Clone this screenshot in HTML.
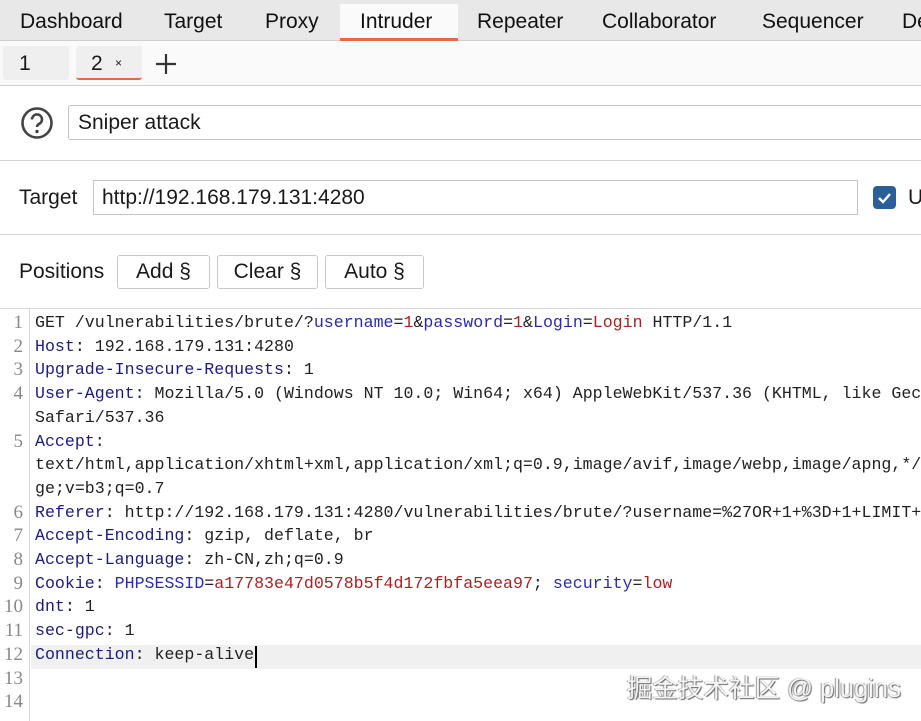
<!DOCTYPE html>
<html><head><meta charset="utf-8"><style>
*{margin:0;padding:0;box-sizing:border-box}
body{width:921px;height:721px;overflow:hidden;background:#fff;font-family:"Liberation Sans","Noto Sans CJK SC",sans-serif;color:#1a1a1a;position:relative}
.abs{position:absolute}
.top{left:0;top:0;width:921px;height:41px;background:#e8e8e8;border-bottom:1px solid #cfcfcf}
.tab{position:absolute;top:10px;font-size:21px;color:#111}
.sub{left:0;top:41px;width:921px;height:45px;background:#fafafa;border-bottom:1px solid #d0d0d0}
.hl{left:0;width:921px;height:1px;background:#d4d4d4}
.btn{position:absolute;top:255px;height:34px;border:1px solid #c8c8c8;border-radius:3px;background:#fff;font-size:21px;text-align:center;line-height:31px}
.gut{left:0;top:309px;width:30px;height:412px;border-right:1px solid #d8d8d8}
.row{position:absolute;left:0;width:921px;height:23.7px;font-family:"Liberation Mono",monospace;font-size:16.6px;line-height:23.7px;white-space:pre;color:#222}
.row .n{position:absolute;right:898px;color:#888;font-family:"Liberation Serif",serif;font-size:19px}
.row .t{position:absolute;left:35px}
.k{color:#1c1c80}.p{color:#2a2ab8}.v{color:#b02020}
</style></head><body>
<div class="abs top">
<span class="tab" style="left:20px">Dashboard</span>
<span class="tab" style="left:164px">Target</span>
<span class="tab" style="left:265px">Proxy</span>
<div class="abs" style="left:340px;top:4px;width:118px;height:37px;background:#fafafa;border-bottom:3px solid #e8693f"></div>
<span class="tab" style="left:360px">Intruder</span>
<span class="tab" style="left:477px">Repeater</span>
<span class="tab" style="left:602px">Collaborator</span>
<span class="tab" style="left:762px">Sequencer</span>
<span class="tab" style="left:902px">De</span>
</div>
<div class="abs sub">
<div class="abs" style="left:3px;top:5px;width:66px;height:34px;background:#efefef;border-radius:3px"></div>
<span class="abs" style="left:19px;top:11px;font-size:21px">1</span>
<div class="abs" style="left:76px;top:5px;width:66px;height:34px;background:#efefef;border-radius:3px;border-bottom:2px solid #e8693f"></div>
<span class="abs" style="left:91px;top:11px;font-size:21px">2</span>
<span class="abs" style="left:115px;top:15px;font-size:12px">×</span>
<svg class="abs" style="left:155px;top:12px" width="22" height="22"><path d="M11 1v20M1 11h20" stroke="#333" stroke-width="2.2"/></svg>
</div>
<svg class="abs" style="left:20px;top:106px" width="34" height="34"><circle cx="17" cy="17" r="14.5" fill="none" stroke="#444" stroke-width="2.6"/><path d="M12 13.5a5 5 0 1 1 7 4.5c-1.5.8-2 1.5-2 3" fill="none" stroke="#444" stroke-width="2.6"/><circle cx="17" cy="25.5" r="1.7" fill="#444"/></svg>
<div class="abs" style="left:68px;top:105px;width:860px;height:35px;border:1px solid #c4c4c4;border-radius:3px"></div>
<span class="abs" style="left:78px;top:111px;font-size:21px">Sniper attack</span>
<div class="abs hl" style="top:160px"></div>
<span class="abs" style="left:19px;top:186px;font-size:21px">Target</span>
<div class="abs" style="left:93px;top:180px;width:765px;height:35px;border:1px solid #c4c4c4"></div>
<span class="abs" style="left:102px;top:186px;font-size:21px">http://192.168.179.131:4280</span>
<svg class="abs" style="left:873px;top:186px" width="24" height="24"><rect x="0" y="0" width="23" height="23" rx="4" fill="#2a6099"/><path d="M6 12l4 4 7-8" fill="none" stroke="#fff" stroke-width="2.4"/></svg>
<span class="abs" style="left:908px;top:186px;font-size:21px">U</span>
<div class="abs hl" style="top:234px"></div>
<span class="abs" style="left:19px;top:260px;font-size:21px">Positions</span>
<div class="btn" style="left:117px;width:93px">Add §</div>
<div class="btn" style="left:217px;width:101px">Clear §</div>
<div class="btn" style="left:325px;width:99px">Auto §</div>
<div class="abs hl" style="top:308px;background:#d8d8d8"></div>
<div class="abs gut"></div>
<div class="abs" style="left:31px;top:645px;width:890px;height:24px;background:#f0f0f0"></div>
<div class="row" style="top:311px"><span class="n">1</span><span class="t">GET /vulnerabilities/brute/?<span class="p">username</span>=<span class="v">1</span>&amp;<span class="p">password</span>=<span class="v">1</span>&amp;<span class="p">Login</span>=<span class="v">Login</span> HTTP/1.1</span></div>
<div class="row" style="top:334.7px"><span class="n">2</span><span class="t"><span class="k">Host</span>: 192.168.179.131:4280</span></div>
<div class="row" style="top:358.4px"><span class="n">3</span><span class="t"><span class="k">Upgrade-Insecure-Requests</span>: 1</span></div>
<div class="row" style="top:382.1px"><span class="n">4</span><span class="t"><span class="k">User-Agent</span>: Mozilla/5.0 (Windows NT 10.0; Win64; x64) AppleWebKit/537.36 (KHTML, like Gecko)</span></div>
<div class="row" style="top:405.8px"><span class="t">Safari/537.36</span></div>
<div class="row" style="top:429.5px"><span class="n">5</span><span class="t"><span class="k">Accept</span>:</span></div>
<div class="row" style="top:453.2px"><span class="t">text/html,application/xhtml+xml,application/xml;q=0.9,image/avif,image/webp,image/apng,*/*</span></div>
<div class="row" style="top:476.9px"><span class="t">ge;v=b3;q=0.7</span></div>
<div class="row" style="top:500.6px"><span class="n">6</span><span class="t"><span class="k">Referer</span>: http://192.168.179.131:4280/vulnerabilities/brute/?username=%27OR+1+%3D+1+LIMIT+1</span></div>
<div class="row" style="top:524.3px"><span class="n">7</span><span class="t"><span class="k">Accept-Encoding</span>: gzip, deflate, br</span></div>
<div class="row" style="top:548px"><span class="n">8</span><span class="t"><span class="k">Accept-Language</span>: zh-CN,zh;q=0.9</span></div>
<div class="row" style="top:571.7px"><span class="n">9</span><span class="t"><span class="k">Cookie</span>: <span class="p">PHPSESSID</span>=<span class="v">a17783e47d0578b5f4d172fbfa5eea97</span>; <span class="p">security</span>=<span class="v">low</span></span></div>
<div class="row" style="top:595.4px"><span class="n">10</span><span class="t"><span class="k">dnt</span>: 1</span></div>
<div class="row" style="top:619.1px"><span class="n">11</span><span class="t"><span class="k">sec-gpc</span>: 1</span></div>
<div class="row" style="top:642.8px"><span class="n">12</span><span class="t"><span class="k">Connection</span>: keep-alive</span></div>
<div class="abs" style="left:255px;top:646px;width:2px;height:22px;background:#000"></div>
<div class="row" style="top:666.5px"><span class="n">13</span></div>
<div class="row" style="top:690.2px"><span class="n">14</span></div>
<div class="abs" style="left:627px;top:668px;font-size:25.5px;color:#f4f4f4;text-shadow:1px 1px 1px #666,-1px 0 1px #999;font-family:'Liberation Sans','Noto Sans CJK SC',sans-serif">掘金技术社区 @ plugins</div>
</body></html>
